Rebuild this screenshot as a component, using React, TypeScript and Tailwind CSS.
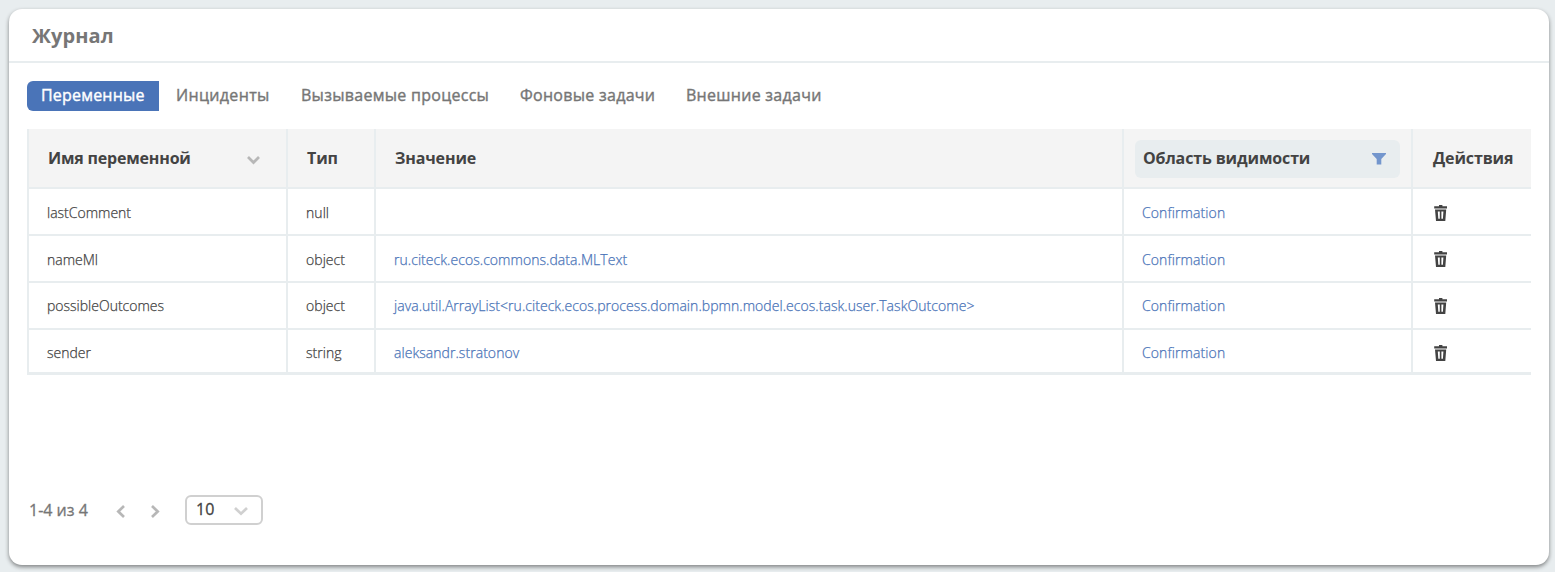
import React from "react";

const tabs = [
  { label: "Инциденты", cls: "ml-[17px] w-[94px] tracking-[0.34px]" },
  { label: "Вызываемые процессы", cls: "ml-[31px] w-[188px]" },
  { label: "Фоновые задачи", cls: "ml-[31px] w-[135px]" },
  { label: "Внешние задачи", cls: "ml-[31px] w-[135px]" },
];

const rows = [
  { name: "lastComment", type: "null", value: "", h: "h-[47px] leading-[47px]", icon: "pt-[16px]" },
  { name: "nameMl", type: "object", value: "ru.citeck.ecos.commons.data.MLText", h: "h-[47px] leading-[47px]", icon: "pt-[15px]" },
  {
    name: "possibleOutcomes",
    type: "object",
    value: "java.util.ArrayList<ru.citeck.ecos.process.domain.bpmn.model.ecos.task.user.TaskOutcome>",
    h: "h-[47px] leading-[45px]",
    icon: "pt-[15px]",
  },
  { name: "sender", type: "string", value: "aleksandr.stratonov", h: "h-[44px] leading-[46px]", icon: "pt-[15px]" },
];

const grid = "grid grid-cols-[259px_88px_748px_289px_120px] grid-rows-[100%] w-[1504px]";
const cell = "border-l-2 border-[#e8edef]";

function Chevron({ d, className, w, h }: { d: string; className: string; w: number; h: number }) {
  return (
    <svg className={className} width={w} height={h} viewBox={`0 0 ${w} ${h}`} fill="none" stroke="currentColor" strokeWidth="2.7">
      <path d={d} />
    </svg>
  );
}

function Trash() {
  return (
    <svg width="14" height="16" viewBox="0 0 14 16" fill="#434343" className="block">
      <path d="M5 0h3.4v1.2H13v2.2H0.2V1.2H5z" />
      <path fillRule="evenodd" d="M1 4.6h11.2l-.9 11.4H2zM3.8 6.6l.5 7.2h1.5V6.6zM7.4 6.6v7.2h1.5l.5-7.2z" />
    </svg>
  );
}

export default function App() {
  return (
    <div className="h-[572px] w-[1555px] overflow-hidden bg-[#e8edef] pl-[9px] pt-[9px] font-['Open_Sans','Noto_Sans',sans-serif]">
      <div className="flex h-[556px] w-[1540px] flex-col rounded-[13px] bg-white shadow-[0_2px_4px_rgba(0,0,0,0.45)]">
        <div className="h-[54px] border-b-2 border-[#e8edef] pl-[23px]">
          <h1 className="text-[20px] leading-[53px] font-bold tracking-[0.1px] text-[#767676]">Журнал</h1>
        </div>
        <div className="mt-[18px] ml-[18px] flex h-[30px] text-[16px] leading-[29px] tracking-[0.28px] whitespace-nowrap text-[#767676] [-webkit-text-stroke:0.4px_currentColor]">
          <div className="w-[132px] rounded-l-[6px] bg-[#4a74b8] pl-[14px] tracking-[0.2px] text-white">Переменные</div>
          {tabs.map((t) => (
            <div key={t.label} className={t.cls}>{t.label}</div>
          ))}
        </div>
        <div className="mt-[18px] ml-[18px] w-[1504px]">
          <div className={`${grid} h-[60px] border-b-2 border-[#e8edef] bg-[#f4f4f4] text-[16px] font-bold tracking-[-0.13px] whitespace-nowrap text-[#434343]`}>
            <div className={`${cell} flex pl-[19px] leading-[58px] tracking-[-0.19px]`}>
              Имя переменной
              <Chevron className="mt-[27px] ml-auto mr-[26px] text-[#b7b7b7]" d="M1 1l5.5 5.5L12 1" w={13} h={9} />
            </div>
            <div className={`${cell} pl-[19px] leading-[58px]`}>Тип</div>
            <div className={`${cell} pl-[19px] leading-[58px]`}>Значение</div>
            <div className={`${cell} pt-[11px] pl-[11px]`}>
              <div className="flex h-[38px] w-[265px] items-center justify-between rounded-[6px] bg-[#e8edef] pr-[14px] pl-[8px] leading-[36px]">
                <span className="-mt-[2px]">Область видимости</span>
                <svg width="14" height="12" viewBox="0 0 14 12" fill="#7396cd">
                  <path d="M0 0h14v1L9.3 6v5.5H4.7V6L0 1z" />
                </svg>
              </div>
            </div>
            <div className={`${cell} pl-[20px] leading-[58px]`}>Действия</div>
          </div>
          <div className="border-b border-[#e8edef]">
            {rows.map((r) => (
              <div key={r.name} className={`${grid} ${r.h} border-b-2 border-[#e8edef] text-[14px] font-light tracking-[0.05px] whitespace-nowrap text-[#434343] [-webkit-text-stroke:0.25px_currentColor]`}>
                <div className={`${cell} pl-[18px] tracking-[0px]`}>{r.name}</div>
                <div className={`${cell} pl-[18px]`}>{r.type}</div>
                <div className={`${cell} pl-[18px] text-[#4a74b8]`}>{r.value}</div>
                <div className={`${cell} pl-[18px] tracking-[0.1px] text-[#4a74b8]`}>Confirmation</div>
                <div className={`${cell} ${r.icon} pl-[21px]`}><Trash /></div>
              </div>
            ))}
          </div>
        </div>
        <div className="mt-[120px] ml-[20px] flex h-[30px] text-[16px] whitespace-nowrap text-[#767676] [-webkit-text-stroke:0.3px_currentColor]">
          <span className="w-[87px] leading-[30px]">1-4 из 4</span>
          <Chevron className="mt-[10px] text-[#b7b7b7]" d="M8 1L2.3 6.5L8 12" w={10} h={13} />
          <Chevron className="mt-[10px] ml-[24px] text-[#b7b7b7]" d="M2 1l5.7 5.5L2 12" w={10} h={13} />
          <div className="ml-[25px] flex h-[30px] w-[78px] rounded-[6px] border-2 border-[#d0d0d0] pl-[9px] leading-[25px] text-[#434343]">
            10
            <Chevron className="mt-[10px] ml-auto mr-[13px] text-[#d0d0d0]" d="M1 1l6 5.7L13 1" w={14} h={9} />
          </div>
        </div>
      </div>
    </div>
  );
}
